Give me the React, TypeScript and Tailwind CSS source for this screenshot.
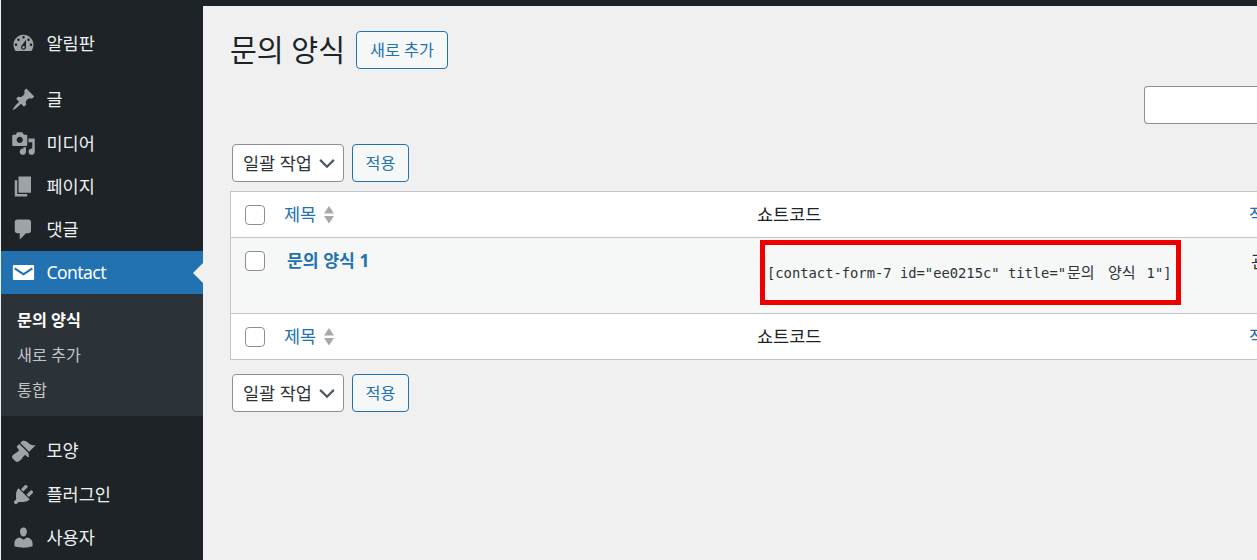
import React from "react";

const font = { fontFamily: '"Noto Sans", "Noto Sans CJK KR", sans-serif' };

const paths: Record<string, string> = {
  dashboard:
    "M3.76 16h12.48c1.1-1.37 1.76-3.11 1.76-5 0-4.42-3.58-8-8-8s-8 3.58-8 8c0 1.89.66 3.63 1.76 5zM10 4c.55 0 1 .45 1 1s-.45 1-1 1-1-.45-1-1 .45-1 1-1zM6 6c.55 0 1 .45 1 1s-.45 1-1 1-1-.45-1-1 .45-1 1-1zm8 0c.55 0 1 .45 1 1s-.45 1-1 1-1-.45-1-1 .45-1 1-1zm-5.37 5.55L12 7v6c0 1.1-.9 2-2 2s-2-.9-2-2c0-.57.24-1.08.63-1.45zM4 10c.55 0 1 .45 1 1s-.45 1-1 1-1-.45-1-1 .45-1 1-1zm12 0c.55 0 1 .45 1 1s-.45 1-1 1-1-.45-1-1 .45-1 1-1zm-5 3c0-.55-.45-1-1-1s-1 .45-1 1 .45 1 1 1 1-.45 1-1z",
  pin: "M10.44 3.02l1.82-1.82 6.36 6.35-1.83 1.82c-1.05-.68-2.48-.57-3.41.36l-.75.75c-.92.93-1.04 2.35-.35 3.41l-1.83 1.82-2.41-2.41-2.8 2.79c-.42.42-3.38 2.71-3.8 2.29s1.86-3.39 2.28-3.81l2.79-2.79L4.1 9.36l1.83-1.82c1.05.69 2.48.57 3.4-.36l.75-.75c.93-.92 1.05-2.35.36-3.41z",
  media:
    "M13 11V4c0-.55-.45-1-1-1h-1.67L9 1H5L3.67 3H2c-.55 0-1 .45-1 1v7c0 .55.45 1 1 1h10c.55 0 1-.45 1-1zM7 4.5c1.38 0 2.5 1.12 2.5 2.5S8.38 9.5 7 9.5 4.5 8.38 4.5 7 5.62 4.5 7 4.5zM14 6h5v10.5c0 1.38-1.12 2.5-2.5 2.5S14 17.88 14 16.5s1.12-2.5 2.5-2.5c.17 0 .34.02.5.05V9h-3V6zm-4 8.05V13h2v3.5c0 1.38-1.12 2.5-2.5 2.5S7 17.88 7 16.5 8.12 14 9.5 14c.17 0 .34.02.5.05z",
  page: "M6 15V2h10v13H6zm-1 1h8v2H3V5h2v11z",
  comment:
    "M5 2h9c1.1 0 2 .9 2 2v7c0 1.1-.9 2-2 2h-2l-5 5v-5H5c-1.1 0-2-.9-2-2V4c0-1.1.9-2 2-2z",
  email:
    "M2.5 4h15c.55 0 1 .45 1 1v10c0 .55-.45 1-1 1h-15c-.55 0-1-.45-1-1V5c0-.55.45-1 1-1zM3.4 6l-.9 1.3L10 12.3l7.5-5-.9-1.3L10 10.4z",
  brush:
    "M14.48 11.06L7.41 3.99l1.5-1.5c.5-.56 2.3-.47 3.51.32 1.21.8 1.43 1.28 2.91 2.1 1.18.64 2.45 1.26 4.45.85zm-.71.71L6.7 4.7 4.93 6.47c-.39.39-.39 1.02 0 1.41l1.06 1.06c.39.39.39 1.03 0 1.42-.6.6-1.43 1.11-2.21 1.69-.35.26-.7.53-1.01.84C1.43 13.23.28 15.33 1.2 16.25l2.55 2.55c.92.92 3.02-.23 4.34-1.57.31-.31.58-.66.84-1.01.58-.78 1.09-1.61 1.69-2.21.39-.39 1.03-.39 1.42 0l1.06 1.06c.39.39 1.02.39 1.41 0z",
  plugin:
    "M13.11 4.36L9.87 7.6 8 5.73l3.24-3.24c.35-.34 1.05-.2 1.56.32.52.51.66 1.21.31 1.55zm-8 1.77l.91-1.12 9.01 9.01-1.19.84c-.71.71-2.63 1.16-3.82 1.16H6.14L4.9 17.26c-.59.59-1.54.59-2.12 0-.59-.58-.59-1.53 0-2.12l1.24-1.24v-3.88c0-1.13.4-3.19 1.09-3.89zm7.26 3.97l3.24-3.24c.34-.35 1.04-.21 1.55.31.52.51.66 1.21.31 1.55l-3.24 3.25z",
  user: "M10 9.25c-2.27 0-2.73-3.44-2.73-3.44C7 4.02 7.82 2 9.97 2c2.16 0 2.98 2.02 2.71 3.81 0 0-.41 3.44-2.68 3.44zm0 2.57L12.72 10c2.39 0 4.52 2.33 4.52 4.53v2.49s-3.65 1.13-7.24 1.13c-3.65 0-7.24-1.13-7.24-1.13v-2.49c0-2.25 1.94-4.48 4.47-4.48z",
};

function MenuItem({ icon, label, active }: { icon: string; label: string; active?: boolean }) {
  return (
    <div
      className={`relative flex h-[43.2px] items-center pl-[10px] ${
        active ? "bg-[#2271b1] text-white" : "text-[#f0f0f1]"
      }`}
    >
      <svg viewBox="0 0 20 20" className={`h-[25px] w-[25px] shrink-0 ${active ? "fill-white" : "fill-[#9ea3a8]"}`}>
        <path fillRule="evenodd" d={paths[icon]} />
      </svg>
      <span className={`ml-[10.5px] pt-[0.4px] text-[17.5px] leading-none ${active ? "tracking-[-0.55px]" : ""}`}>{label}</span>
      {active && (
        <span className="absolute right-0 top-1/2 h-0 w-0 -translate-y-1/2 border-y-[10px] border-r-[10px] border-y-transparent border-r-[#f0f0f1]" />
      )}
    </div>
  );
}

function Btn({ label, className }: { label: string; className: string }) {
  return (
    <div
      className={`flex items-center justify-center rounded-[4px] border border-[#2271b1] bg-[#f6f7f7] text-[16.25px] text-[#2271b1] ${className}`}
    >
      {label}
    </div>
  );
}

function BulkBar({ className }: { className: string }) {
  return (
    <div className={`flex gap-[8px] pl-[2px] ${className}`}>
      <div className="flex h-[38px] w-[112px] items-center justify-between rounded-[4px] border border-[#8c8f94] bg-white pl-[10px] pr-[6px] text-[17.5px] text-[#2c3338]">
        <span>일괄 작업</span>
        <svg viewBox="0 0 16 16" className="h-[20px] w-[20px] fill-none stroke-[#50575e] stroke-[1.8]">
          <path d="M2.5 5.5 8 11l5.5-5.5" />
        </svg>
      </div>
      <Btn label="적용" className="h-[38px] w-[57px]" />
    </div>
  );
}

function Check() {
  return <div className="h-[20px] w-[20px] shrink-0 rounded-[4px] border border-[#8c8f94] bg-white" />;
}

function HeadRow({ className }: { className: string }) {
  return (
    <div className={`flex h-[46px] items-center bg-white text-[17.5px] ${className}`}>
      <div className="flex w-[526px] shrink-0 items-center pl-[14px]">
        <Check />
        <span className="ml-[19px] text-[#2271b1]">제목</span>
        <svg viewBox="0 0 10 20" className="ml-[8px] h-[20px] w-[10px] fill-[#a7aaad]">
          <path d="M5 1 10 8.5H0zM5 18.5 0 11h10z" />
        </svg>
      </div>
      <div className="w-[492px] shrink-0 text-[#1d2327]">쇼트코드</div>
      <div className="text-[#2271b1]">작성자</div>
    </div>
  );
}

export default function App() {
  return (
    <div className="flex h-[560px] w-[1257px] flex-col overflow-hidden bg-[#f0f0f1] pl-[1px]" style={font}>
      <div className="h-[6px] shrink-0 bg-[#1d2327]" />
      <div className="flex min-h-0 flex-1">
        <aside className="w-[202px] shrink-0 bg-[#1d2327] pt-[16px]">
          <MenuItem icon="dashboard" label="알림판" />
          <div className="h-[13.2px]" />
          <MenuItem icon="pin" label="글" />
          <MenuItem icon="media" label="미디어" />
          <MenuItem icon="page" label="페이지" />
          <MenuItem icon="comment" label="댓글" />
          <MenuItem icon="email" label="Contact" active />
          <div className="flex h-[121.6px] flex-col bg-[#2c3338] pl-[16px] pt-[8px] text-[16.25px]">
            <div className="flex h-[35px] items-center font-bold text-white">문의 양식</div>
            <div className="flex h-[35px] items-center text-[#c3c4c7]">새로 추가</div>
            <div className="flex h-[35px] items-center text-[#c3c4c7]">통합</div>
          </div>
          <div className="h-[13.4px]" />
          <MenuItem icon="brush" label="모양" />
          <MenuItem icon="plugin" label="플러그인" />
          <MenuItem icon="user" label="사용자" />
        </aside>
        <main className="min-w-0 flex-1 overflow-hidden pl-[27px]">
          <div className="flex items-center pt-[25px]">
            <h1 className="text-[29.2px] font-normal leading-[38px] text-[#1d2327]">문의 양식</h1>
            <Btn label="새로 추가" className="ml-[11px] h-[38px] w-[92px]" />
          </div>
          <div className="flex justify-end pt-[17px]">
            <div className="h-[38px] w-[113px] shrink-0 rounded-l-[4px] border-y border-l border-[#8c8f94] bg-white" />
          </div>
          <BulkBar className="pt-[20px]" />
          <div className="relative mt-[9px] w-[1100px] border border-[#c3c4c7]">
            <HeadRow className="border-b border-[#c3c4c7]" />
            <div className="flex h-[75px] bg-[#f6f7f7]">
              <div className="flex w-[526px] shrink-0 items-start pl-[14px] pt-[13px]">
                <Check />
                <span className="ml-[22px] text-[17.25px] font-bold leading-[20px] text-[#2271b1]">문의 양식 1</span>
              </div>
              <div
                className="w-[494px] shrink-0 whitespace-nowrap pl-[10px] pt-[24px] text-[13.8px] leading-[20px] text-[#2c3338]"
                style={{ fontFamily: '"DejaVu Sans Mono", "Noto Sans CJK KR", monospace' }}
              >
                [contact-form-7 id="ee0215c" title="
                <span
                  className="ml-[1px] mr-[11px] text-[15px] [word-spacing:10px]"
                  style={{ fontFamily: '"Noto Sans CJK KR", sans-serif' }}
                >
                  문의 양식
                </span>
                1"]
              </div>
              <div className="pt-[10px] text-[17.5px] text-[#2c3338]">관리자</div>
            </div>
            <HeadRow className="border-t border-[#c3c4c7]" />
            <div className="absolute left-[529px] top-[48px] h-[65px] w-[421px] border-[5px] border-[#ee0000]" />
          </div>
          <BulkBar className="pt-[14px]" />
        </main>
      </div>
    </div>
  );
}
